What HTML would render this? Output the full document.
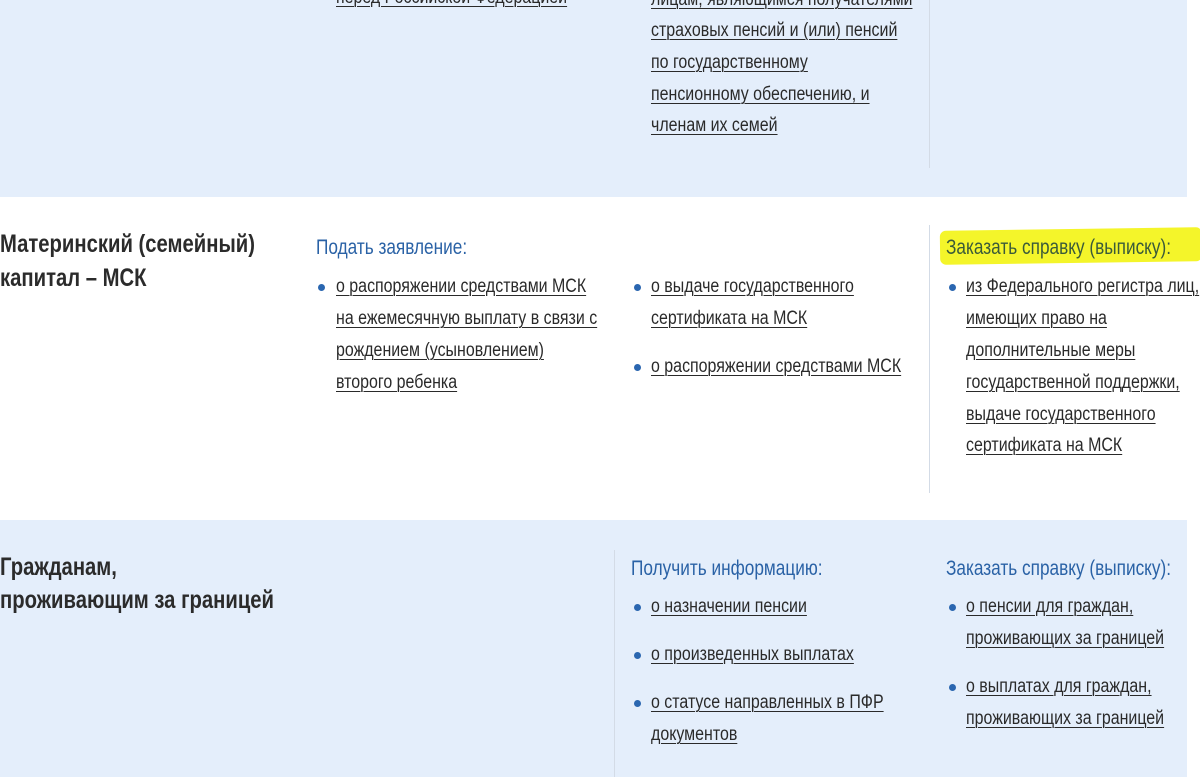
<!DOCTYPE html>
<html><head><meta charset="utf-8"><style>
body{margin:0;width:1200px;height:777px;overflow:hidden;background:#fff;position:relative;font-family:"Liberation Sans",sans-serif;}
.b{position:absolute;background:#e4eefb;}
.v{position:absolute;width:1px;background:#d3dbe6;}
.l{position:absolute;font-size:19px;line-height:24px;white-space:nowrap;color:#2a2a2a;text-decoration:underline;text-underline-offset:3px;text-decoration-thickness:1px;transform:scaleX(0.84);transform-origin:0 0;}
.h{position:absolute;font-size:21px;line-height:26px;white-space:nowrap;color:#2a62a6;transform:scaleX(0.82);transform-origin:0 0;}
.t{position:absolute;font-size:25px;line-height:30px;white-space:nowrap;color:#2b2b2b;font-weight:bold;transform:scaleX(0.81);transform-origin:0 0;}
.d{position:absolute;width:7px;height:7px;border-radius:50%;background:#2a66b0;}
.hl{position:absolute;background:#f4f52a;border-radius:6px;}
</style></head><body>
<div class="b" style="left:0;top:0;width:1187px;height:197px"></div>
<div class="b" style="left:0;top:520px;width:1187px;height:257px"></div>
<div class="v" style="left:929px;top:0;height:168px"></div>
<div class="v" style="left:929px;top:225px;height:268px"></div>
<div class="v" style="left:614px;top:550px;height:227px"></div>

<div class="l" style="left:336px;top:-14px">перед Российской Федерацией</div>
<div class="l" style="left:651px;top:-12px">лицам, являющимся получателями</div>
<div class="l" style="left:651px;top:19px">страховых пенсий и (или) пенсий</div>
<div class="l" style="left:651px;top:51px">по государственному</div>
<div class="l" style="left:651px;top:83px">пенсионному обеспечению, и</div>
<div class="l" style="left:651px;top:114px">членам их семей</div>

<div class="t" style="left:0;top:229px">Материнский (семейный)</div>
<div class="t" style="left:0;top:263px">капитал – МСК</div>
<div class="h" style="left:316px;top:235px">Подать заявление:</div>
<div class="d" style="left:318px;top:284px"></div>
<div class="l" style="left:336px;top:275px">о распоряжении средствами МСК</div>
<div class="l" style="left:336px;top:307px">на ежемесячную выплату в связи с</div>
<div class="l" style="left:336px;top:339px">рождением (усыновлением)</div>
<div class="l" style="left:336px;top:371px">второго ребенка</div>
<div class="d" style="left:634px;top:284px"></div>
<div class="l" style="left:651px;top:275px">о выдаче государственного</div>
<div class="l" style="left:651px;top:307px">сертификата на МСК</div>
<div class="d" style="left:634px;top:364px"></div>
<div class="l" style="left:651px;top:355px">о распоряжении средствами МСК</div>
<div class="hl" style="left:940px;top:229px;width:262px;height:34px;transform:rotate(-0.8deg)"></div>
<div class="h" style="left:946px;top:235px;color:#3a5a3a">Заказать справку (выписку):</div>
<div class="d" style="left:949px;top:284px"></div>
<div class="l" style="left:966px;top:275px">из Федерального регистра лиц,</div>
<div class="l" style="left:966px;top:307px">имеющих право на</div>
<div class="l" style="left:966px;top:339px">дополнительные меры</div>
<div class="l" style="left:966px;top:371px">государственной поддержки,</div>
<div class="l" style="left:966px;top:403px">выдаче государственного</div>
<div class="l" style="left:966px;top:434px">сертификата на МСК</div>

<div class="t" style="left:0;top:552px">Гражданам,</div>
<div class="t" style="left:0;top:585px">проживающим за границей</div>
<div class="h" style="left:631px;top:556px">Получить информацию:</div>
<div class="d" style="left:634px;top:604px"></div>
<div class="l" style="left:651px;top:595px">о назначении пенсии</div>
<div class="d" style="left:634px;top:652px"></div>
<div class="l" style="left:651px;top:643px">о произведенных выплатах</div>
<div class="d" style="left:634px;top:700px"></div>
<div class="l" style="left:651px;top:691px">о статусе направленных в ПФР</div>
<div class="l" style="left:651px;top:723px">документов</div>
<div class="h" style="left:946px;top:556px">Заказать справку (выписку):</div>
<div class="d" style="left:949px;top:604px"></div>
<div class="l" style="left:966px;top:595px">о пенсии для граждан,</div>
<div class="l" style="left:966px;top:627px">проживающих за границей</div>
<div class="d" style="left:949px;top:684px"></div>
<div class="l" style="left:966px;top:675px">о выплатах для граждан,</div>
<div class="l" style="left:966px;top:707px">проживающих за границей</div>
</body></html>
